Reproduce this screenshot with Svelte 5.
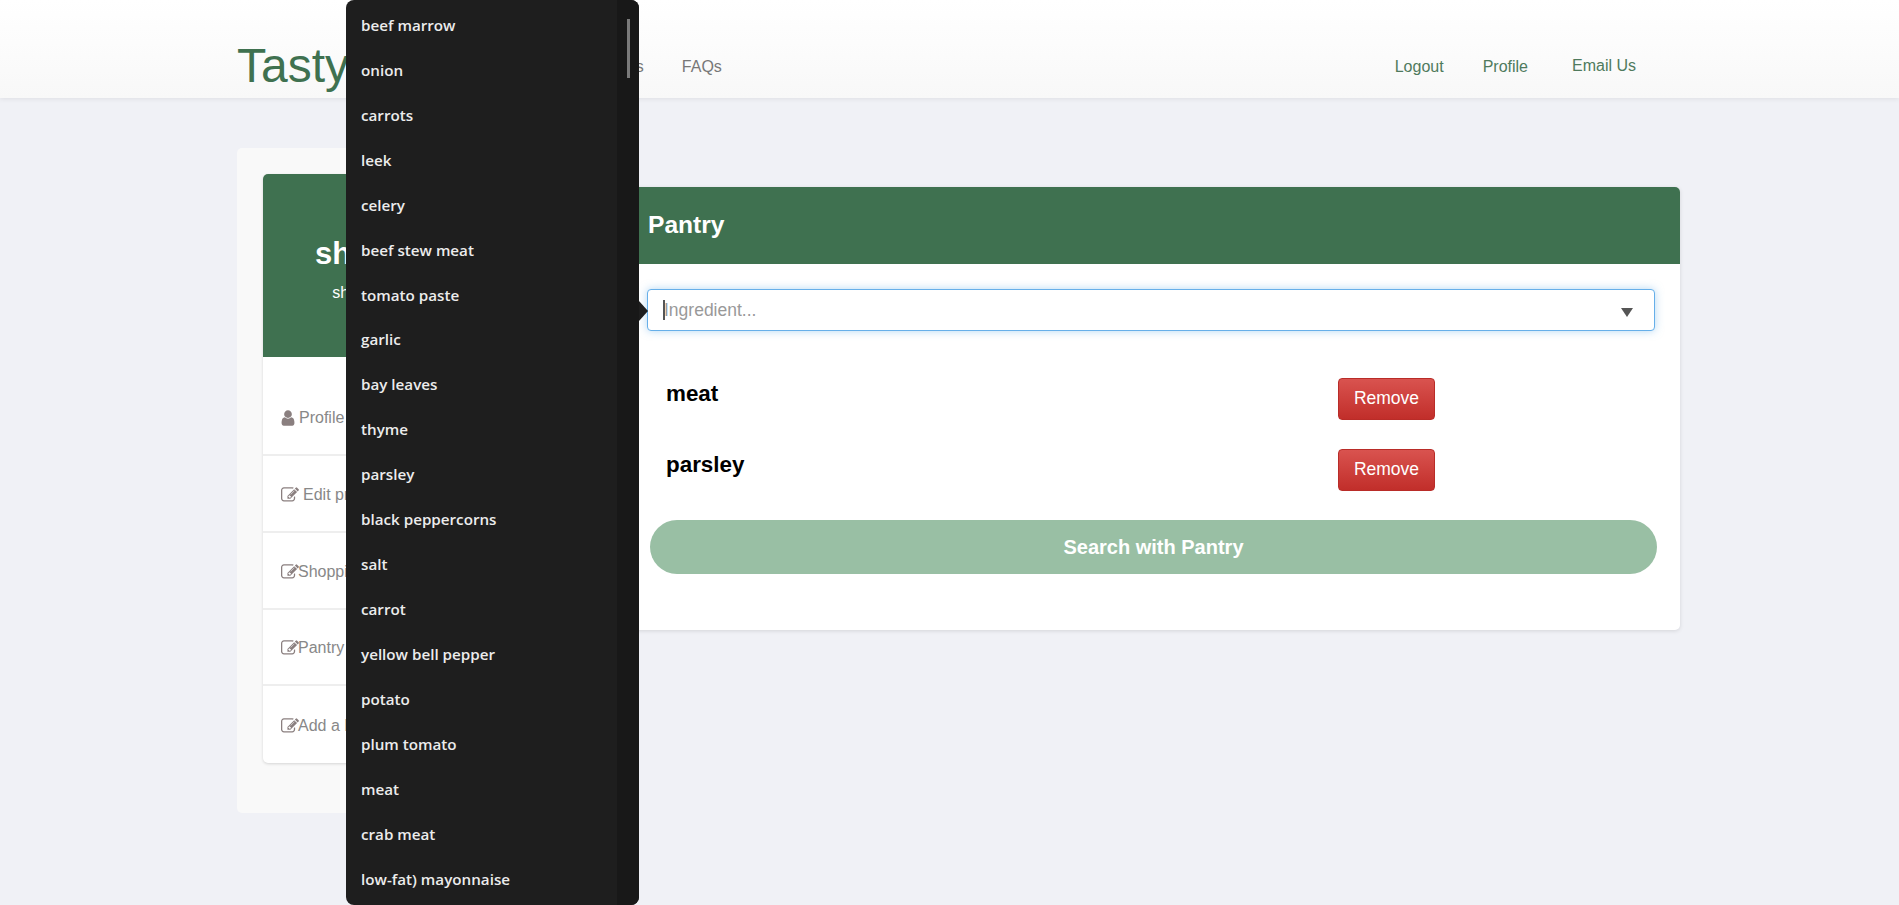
<script>
  const ingredients = ['beef marrow', 'onion', 'carrots', 'leek', 'celery', 'beef stew meat', 'tomato paste', 'garlic', 'bay leaves', 'thyme', 'parsley', 'black peppercorns', 'salt', 'carrot', 'yellow bell pepper', 'potato', 'plum tomato', 'meat', 'crab meat', 'low-fat) mayonnaise'];
  const pantry = ['meat', 'parsley'];
  const menu = [
    { label: 'Profile', icon: 'user', gap: true },
    { label: 'Edit profile', icon: 'edit', gap: true },
    { label: 'Shopping List', icon: 'edit' },
    { label: 'Pantry', icon: 'edit' },
    { label: 'Add a Recipe', icon: 'edit' }
  ];
  const paths = {
    user: 'M1536 1399q0 109-62.5 187t-150.5 78h-854q-88 0-150.5-78t-62.5-187q0-85 8.5-160.5t31.5-152 58.5-131 94-89 134.5-34.5q131 128 313 128t313-128q76 0 134.5 34.5t94 89 58.5 131 31.5 152 8.5 160.5zm-256-887q0 159-112.5 271.5t-271.5 112.5-271.5-112.5-112.5-271.5 112.5-271.5 271.5-112.5 271.5 112.5 112.5 271.5z',
    edit: 'M888 1184l116-116-152-152-116 116v56h96v96h56zm440-720q-16-16-33 1l-350 350q-17 17-1 33t33-1l350-350q17-17 1-33zm80 594v190q0 119-84.5 203.5t-203.5 84.5h-832q-119 0-203.5-84.5t-84.5-203.5v-832q0-119 84.5-203.5t203.5-84.5h832q63 0 117 25 15 7 18 23 3 17-9 29l-49 49q-14 14-32 8-23-6-45-6h-832q-66 0-113 47t-47 113v832q0 66 47 113t113 47h832q66 0 113-47t47-113v-126q0-13 9-22l64-64q15-15 35-7t20 29zm-96-738l288 288-672 672h-288v-288zm444 132l-92 92-288-288 92-92q28-28 68-28t68 28l152 152q28 28 28 68t-28 68z'
  };
</script>

<div class="page">
  <header class="topbar">
    <a class="brand" href="#home">Tasty</a>
    <nav class="nav-left">
      <a href="#recipes">Recipes</a>
      <a href="#faqs">FAQs</a>
    </nav>
    <nav class="nav-right">
      <a href="#logout">Logout</a>
      <a href="#profile">Profile</a>
      <a class="email" href="#email">Email Us</a>
    </nav>
  </header>

  <main class="content">
    <aside class="side-wrap">
      <div class="side-card">
        <div class="side-head">
          <h2>shopper one</h2>
          <p>shopper@mailer.com</p>
        </div>
        <ul class="side-menu">
          {#each menu as item}
            <li>
              <svg class="icon" class:user={item.icon === 'user'} viewBox="0 0 1792 1792" aria-hidden="true"><path d={paths[item.icon]} /></svg>
              <span class:spaced={item.gap}>{item.label}</span>
            </li>
          {/each}
        </ul>
      </div>
    </aside>

    <section class="panel">
      <div class="panel-head">Pantry</div>
      <div class="panel-body">
        <div class="select-box">
          <span class="caret"></span>
          <span class="placeholder">Ingredient...</span>
          <span class="arrow"></span>
        </div>
        <div class="rows">
          {#each pantry as name}
            <div class="row">
              <span class="name">{name}</span>
              <button class="remove">Remove</button>
            </div>
          {/each}
        </div>
        <button class="search">Search with Pantry</button>
      </div>
    </section>
  </main>

  <div class="dropdown">
    <ul>
      {#each ingredients as ing}
        <li>{ing}</li>
      {/each}
    </ul>
    <div class="track"><div class="thumb"></div></div>
    <span class="pointer"></span>
  </div>
</div>

<style>
  :global(body) {
    margin: 0;
    background: #f0f1f6;
    font-family: "Liberation Sans", Arial, sans-serif;
    overflow: hidden;
  }
  a { text-decoration: none; }
  .page { position: relative; height: 905px; overflow: hidden; }

  .topbar {
    height: 98px;
    box-sizing: border-box;
    display: flex;
    align-items: flex-start;
    padding-left: 237px;
    background: linear-gradient(to bottom, #ffffff, #f8f8f8);
    box-shadow: 0 1px 5px rgba(0, 0, 0, 0.08);
  }
  .brand {
    width: 349px;
    margin-top: 39px;
    font-size: 48px;
    line-height: 54px;
    color: #3f7150;
  }
  .nav-left { display: flex; gap: 38px; margin-top: 58px; line-height: 18px; font-size: 16px; }
  .nav-left a { color: #777; }
  .nav-right {
    display: flex;
    margin-left: auto;
    margin-right: 263px;
    margin-top: 58px;
    line-height: 18px;
    font-size: 16px;
  }
  .nav-right a { color: #4f7a5d; margin-left: 39px; }
  .nav-right .email { margin-left: 44px; margin-top: -1px; }

  .content { display: flex; align-items: flex-start; padding: 50px 0 0 237px; }

  .side-wrap {
    width: 342px;
    box-sizing: border-box;
    padding: 26px 26px 50px;
    background: #f9f9f9;
    border-radius: 5px;
  }
  .side-card {
    background: #fff;
    border-radius: 5px;
    overflow: hidden;
    box-shadow: 0 1px 3px rgba(0, 0, 0, 0.15);
  }
  .side-head {
    height: 183px;
    box-sizing: border-box;
    padding-top: 62px;
    text-align: center;
    background: #3f7150;
    color: #fff;
  }
  .side-head h2 { margin: 0; font-size: 31px; line-height: 36px; font-weight: 700; }
  .side-head p { margin: 10px 0 0; font-size: 16px; line-height: 22px; }

  .side-menu { list-style: none; margin: 0; padding: 22px 0 0; }
  .side-menu li {
    height: 73px;
    display: flex;
    align-items: center;
    padding: 2px 0 0 19px;
    border-bottom: 2px solid #eeeeee;
    font-size: 16px;
    color: #888;
  }
  .side-menu li:nth-child(4) { height: 72px; }
  .side-menu li:last-child { border-bottom: 0; height: 75px; }
  .icon { width: 18px; height: 18px; margin: 0 -1px; fill: #8a7f7f; flex-shrink: 0; }
  .icon.user { margin: 0 -2px 0 -3px; }
  .spaced { margin-left: 5px; }
  .icon.user + .spaced { margin-left: 4px; }

  .panel {
    width: 1080px;
    margin: 39px 0 0 21px;
    background: #fff;
    border-radius: 5px;
    overflow: hidden;
    box-shadow: 0 1px 4px rgba(0, 0, 0, 0.12);
  }
  .panel-head {
    height: 77px;
    box-sizing: border-box;
    padding: 24px 0 0 48px;
    background: #3f7150;
    color: #fff;
    font-size: 24.6px;
    line-height: 28px;
    font-weight: 700;
  }
  .panel-body { height: 366px; box-sizing: border-box; padding: 25px 25px 0 47px; }

  .select-box {
    height: 42px;
    box-sizing: border-box;
    display: flex;
    align-items: center;
    padding: 0 15px;
    background: #fff;
    border: 1px solid #66afe9;
    border-radius: 4px;
    box-shadow: 0 0 8px rgba(102, 175, 233, 0.5);
    font-size: 17.5px;
  }
  .caret { width: 2px; height: 20px; margin-right: -1px; background: #555; }
  .placeholder { color: #999; }
  .arrow {
    margin: 5px 6px 0 auto;
    border-left: 6px solid transparent;
    border-right: 6px solid transparent;
    border-top: 9px solid #555;
  }

  .rows { margin-top: 47px; }
  .row { height: 71px; display: flex; align-items: flex-start; }
  .name {
    margin-left: 19px;
    margin-top: 2px;
    font-size: 22.4px;
    line-height: 28px;
    font-weight: 700;
    color: #000;
  }
  .remove {
    margin-left: auto;
    margin-right: 220px;
    width: 97px;
    height: 42px;
    padding: 0 0 2px;
    background: linear-gradient(to bottom, #d9534f, #c12e2a);
    border: 1px solid #b92c28;
    border-radius: 4px;
    color: #fff;
    font: 17.5px "Liberation Sans", Arial, sans-serif;
    box-sizing: border-box;
  }

  .search {
    display: block;
    width: 1007px;
    height: 54px;
    margin: 0 0 0 3px;
    background: #99bfa4;
    border: 0;
    border-radius: 27px;
    color: #fff;
    font: 700 20px "Liberation Sans", Arial, sans-serif;
  }

  .dropdown {
    position: absolute;
    left: 346px;
    top: 0;
    width: 293px;
    height: 905px;
    background: #1e1e1e;
    border-radius: 8px;
    font-family: "Open Sans", sans-serif;
  }
  .dropdown ul {
    list-style: none;
    margin: 0;
    padding: 3px 0 0 15px;
    height: 100%;
    box-sizing: border-box;
    overflow: hidden;
  }
  .dropdown li {
    height: 44.93px;
    line-height: 44.93px;
    font-size: 15.2px;
    font-weight: 600;
    color: #ececec;
    white-space: nowrap;
  }
  .track {
    position: absolute;
    right: 0;
    top: 0;
    bottom: 0;
    width: 22px;
    background: #181818;
    border-radius: 0 8px 8px 0;
  }
  .thumb {
    position: absolute;
    left: 10px;
    top: 19px;
    width: 3px;
    height: 59px;
    background: #7a7a7a;
  }
  .pointer {
    position: absolute;
    left: 100%;
    top: 301px;
    border-top: 10px solid transparent;
    border-bottom: 10px solid transparent;
    border-left: 9px solid #1e1e1e;
  }
</style>
